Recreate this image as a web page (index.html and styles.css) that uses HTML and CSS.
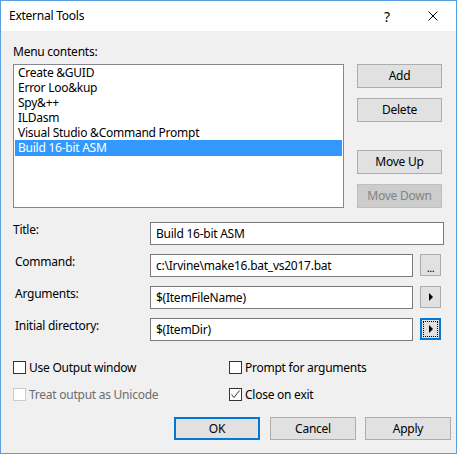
FILE: index.html
```html
<!DOCTYPE html>
<html>
<head>
<meta charset="utf-8">
<link rel="stylesheet" href="styles.css">
</head>
<body>
<div class="window">
  <div class="titlebar">
    <span class="title">External Tools</span>
    <span class="cap-btn help">?</span>
    <span class="cap-btn close"><svg width="10" height="10" viewBox="0 0 10 10"><path d="M0.5 0.5 L9.5 9.5 M9.5 0.5 L0.5 9.5" stroke="#000" stroke-width="1" fill="none"/></svg></span>
  </div>
  <div class="content">
    <div class="menu-label">Menu contents:</div>
    <div class="menu-row">
      <div class="listbox">
        <div class="item">Create &amp;GUID</div>
        <div class="item">Error Loo&amp;kup</div>
        <div class="item">Spy&amp;++</div>
        <div class="item">ILDasm</div>
        <div class="item">Visual Studio &amp;Command Prompt</div>
        <div class="item selected">Build 16-bit ASM</div>
      </div>
      <div class="side-buttons">
        <div class="btn">Add</div>
        <div class="btn">Delete</div>
        <div class="btn spaced">Move Up</div>
        <div class="btn disabled">Move Down</div>
      </div>
    </div>
    <div class="form">
      <div class="flabel first">Title:</div>
      <div class="field wide">Build 16-bit ASM</div>
      <div class="flabel">Command:</div>
      <div class="field">c:\Irvine\make16.bat_vs2017.bat</div>
      <div class="mini"><span class="dots">...</span></div>
      <div class="flabel">Arguments:</div>
      <div class="field">$(ItemFileName)</div>
      <div class="mini"><span class="tri"></span></div>
      <div class="flabel">Initial directory:</div>
      <div class="field">$(ItemDir)</div>
      <div class="mini focused"><span class="focusrect"><span class="tri"></span></span></div>
    </div>
    <div class="checks">
      <div class="check"><span class="box"></span>Use Output window</div>
      <div class="check"><span class="box"></span>Prompt for arguments</div>
      <div class="check disabled"><span class="box"></span>Treat output as Unicode</div>
      <div class="check"><span class="box"><svg width="11" height="11" viewBox="0 0 11 11"><path d="M1.5 5.5 L4 8.5 L9.5 1.5" stroke="#333" stroke-width="1" fill="none"/></svg></span>Close on exit</div>
    </div>
    <div class="footer">
      <div class="btn default">OK</div>
      <div class="btn">Cancel</div>
      <div class="btn apply">Apply</div>
    </div>
  </div>
</div>
</body>
</html>
```
FILE: styles.css
```css
* { box-sizing: border-box; }
html, body { margin: 0; padding: 0; }
body {
  font-family: "Noto Sans", "Open Sans", sans-serif;
  font-size: 12px;
  letter-spacing: -0.25px;
  color: #000;
  background: #fff;
}
.window {
  width: 457px;
  height: 454px;
  border: 1px solid #5a9fe2;
  background: #f0f0f0;
  display: flex;
  flex-direction: column;
}
.titlebar {
  height: 30px;
  background: #fff;
  display: flex;
  align-items: center;
}
.title {
  flex: 1;
  padding-left: 8px;
  line-height: 30px;
}
.cap-btn {
  width: 46px;
  height: 30px;
  display: flex;
  align-items: center;
  justify-content: center;
}
.help { font-size: 14px; }
.content {
  padding: 13px 0 0 12px;
}
.menu-label {
  line-height: 15px;
  height: 15px;
  margin-bottom: 5px;
}
.menu-row {
  display: flex;
  height: 144px;
}
.listbox {
  width: 331px;
  height: 144px;
  border: 1px solid #828790;
  background: #fff;
  padding: 0 1px;
}
.item {
  height: 15px;
  line-height: 15px;
  padding-left: 3px;
  white-space: nowrap;
}
.item.selected {
  background: #3399ff;
  color: #fff;
  height: 16px;
  line-height: 16px;
}
.side-buttons {
  margin-left: 13px;
  display: flex;
  flex-direction: column;
  gap: 10px;
}
.btn {
  width: 85px;
  height: 24px;
  border: 1px solid #adadad;
  background: #e1e1e1;
  display: flex;
  align-items: center;
  justify-content: center;
  line-height: 1;
}
.side-buttons .spaced { margin-top: 18px; }
.btn.disabled {
  background: #cccccc;
  border-color: #bfbfbf;
  color: #838383;
}
.form {
  margin-top: 14px;
  display: grid;
  grid-template-columns: 137px 263px 7px 21px;
  grid-auto-rows: 23px;
  row-gap: 9px;
}
.flabel {
  grid-column: 1;
  padding-left: 2px;
  line-height: 16px;
  white-space: nowrap;
}
.flabel.first { padding-left: 0; }
.field {
  grid-column: 2;
  border: 1px solid #7a7a7a;
  background: #fff;
  padding-left: 5px;
  line-height: 21px;
  white-space: nowrap;
  overflow: hidden;
}
.field.wide {
  grid-column: 2 / span 3;
  width: 294px;
}
.mini {
  grid-column: 4;
  height: 22px;
  width: 21px;
  border: 1px solid #adadad;
  background: #e1e1e1;
  display: flex;
  align-items: center;
  justify-content: center;
}
.dots {
  font-size: 11px;
  line-height: 11px;
  margin-top: 4px;
  letter-spacing: -0.5px;
}
.tri {
  width: 0;
  height: 0;
  border-top: 4px solid transparent;
  border-bottom: 4px solid transparent;
  border-left: 4px solid #000;
  margin-left: 1px;
}
.mini.focused {
  border: 2px solid #0078d7;
}
.focusrect {
  width: 15px;
  height: 16px;
  border: 1px dotted #000;
  display: flex;
  align-items: center;
  justify-content: center;
}
.checks {
  margin-top: 19px;
  display: grid;
  grid-template-columns: 216px auto;
  grid-auto-rows: 15px;
  row-gap: 12px;
}
.check {
  display: flex;
  align-items: center;
  white-space: nowrap;
  line-height: 15px;
}
.box {
  width: 13px;
  height: 13px;
  border: 1px solid #333;
  background: #fff;
  margin-right: 3px;
  display: flex;
  align-items: center;
  justify-content: center;
}
.check.disabled { color: #6d6d6d; }
.check.disabled .box { border-color: #cccccc; }
.footer {
  margin-top: 15px;
  display: flex;
  padding-left: 161px;
  gap: 10px;
}
.footer .btn { height: 23px; width: 86px; }
.footer .apply { margin-left: -1px; }
.btn.default {
  border: 2px solid #0078d7;
}
```
